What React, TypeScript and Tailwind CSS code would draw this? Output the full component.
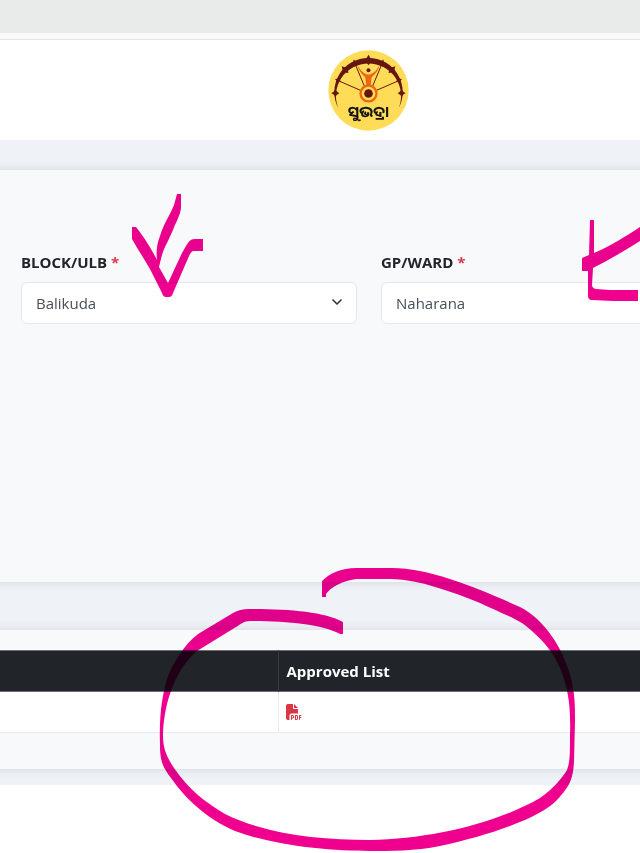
import { ChevronDown } from 'lucide-react'
import { FaFilePdf } from 'react-icons/fa6'

const fields = [
  { id: 'block', label: 'BLOCK/ULB', value: 'Balikuda' },
  { id: 'ward', label: 'GP/WARD', value: 'Naharana' },
]

// angle from the top of the wheel, and spike size
const spikes = [
  [-90, 1], [-67, 0.8], [-45, 1.2], [-24, 0.9], [0, 1.3], [24, 0.9], [45, 1.2], [67, 0.8], [90, 1],
]

function Logo() {
  return (
    <svg viewBox="30 28 244 244" className="h-[81px] w-[81px]" role="img" aria-label="ସୁଭଦ୍ରା">
      <circle cx="152" cy="150" r="121" fill="#ffdc58" />
      <g fill="#64160f">
        <path d="M61 203A103 103 0 1 1 243 203A98 98 0 1 0 61 203Z" />
        {spikes.map(([angle, size]) => (
          <path
            key={angle}
            d="M0 -12L4 -5L11 0L5 5L0 12L-5 5L-11 0L-4 -5Z"
            transform={`translate(152 158) rotate(${angle}) translate(0 -100) scale(${size})`}
          />
        ))}
      </g>
      <g stroke="#64160f" strokeWidth="3">
        <path d="M129 150L60 120M140 138L110 66M164 138L194 66M175 150L244 120" />
      </g>
      <path
        d="M119 73C122 89 132 102 142 109L146 139H158L162 109C172 102 182 89 185 73C177 88 168 98 158 101Q152 103 146 101C136 98 127 88 119 73Z"
        fill="#ef6512"
      />
      <circle cx="152" cy="89" r="6" fill="#64160f" />
      <circle cx="152" cy="159" r="24" fill="#ffdc58" stroke="#ef6512" strokeWidth="7" />
      <circle cx="152" cy="159" r="13" fill="#64160f" />
      <text
        x="152"
        y="230"
        textAnchor="middle"
        className="fill-[#17150f] font-['Noto_Sans_Oriya','Noto_Sans',sans-serif] text-[46px] font-bold"
      >
        ସୁଭଦ୍ରା
      </text>
    </svg>
  )
}

// Pen marks drawn over the page
function Ink() {
  return (
    <svg
      width="640"
      height="853"
      viewBox="0 0 640 853"
      fill="#f0008e"
      aria-hidden="true"
      className="pointer-events-none absolute top-0 left-0 mix-blend-multiply"
    >
      <path d="M132 227H136C146 240 152 250 157 260C156 250 157 244 160 236C164 223 171 213 174 205L177 194H181V208C180 216 176 222 173 230L167 243C162 252 161 259 159 267L168 283L182 253C188 243 189 239 195 239H203V251H194C190 251 189 257 186 263L173 293Q172 297 169 297H166Q163 297 162 293L150 269C145 260 138 250 132 239Z" />
      <path d="M590 220H594L594 253C611 246 626 236 640 227V241C624 251 609 260 593 268L592 285Q592 288 596 289L610 290H638V301C620 301 606 301 592 300Q588 300 588 296L588 271H582V258L589 255Z" />
      <path d="M322 581C330 573 342 568 356 568H392C430 568 480 589 520 607C545 620 563 648 571 678C575 695 575 705 575 720L574 762C573 780 569 787 557 800C540 818 490 835 440 846C415 851 390 851 370 851C330 851 275 846 235 831C205 818 185 797 174 782C163 768 160 762 160 745C159 715 162 695 168 676C177 655 190 638 203 631L233 613C240 609 246 609 252 609C290 609 325 612 343 622V634H340C322 624 285 621 250 621C244 621 241 624 236 627L197 651C178 667 164 698 163 735C163 750 167 757 174 768C189 790 205 802 225 814C265 834 320 840 370 840C430 839 495 824 540 798C553 789 562 778 567 770C570 762 570 755 570 735C571 705 568 688 560 668C553 652 544 642 533 632C521 620 510 617 480 603C450 591 420 580 392 579H356C342 581 331 587 326 594V597H322Z" />
    </svg>
  )
}

export default function App() {
  return (
    <div className="relative isolate min-h-screen overflow-hidden bg-white font-['Segoe_UI','Open_Sans',sans-serif] text-[#212529]">
      <div className="h-[33px] bg-[#e8ebe9]" />
      <div className="h-[7px] border-b border-[#e6e6e6] bg-[#f9f9f9]" />

      <header className="flex h-[100px] justify-center bg-white pt-[10px] pl-[97px]">
        <Logo />
      </header>

      <main className="overflow-hidden bg-[#eff3f8] pt-[30px] pb-4">
        <section className="-mx-4 h-[412px] bg-[#f8f9fb] px-4 pt-20 shadow-[0_0_10px_rgba(0,0,0,0.12)]">
          <form className="flex gap-6 pl-[21px]">
            {fields.map((field) => (
              <div key={field.id} className="w-[336px] shrink-0">
                <label htmlFor={field.id} className="flex gap-1 pb-2 text-[15px] leading-6 font-bold">
                  {field.label} <span className="text-[#dc3545]">*</span>
                </label>
                <div className="relative">
                  <select
                    id={field.id}
                    defaultValue={field.value}
                    className="h-[42px] w-full appearance-none rounded-md border border-[#e4e7eb] bg-white px-[14px] text-[15px] text-[#495057]"
                  >
                    <option>{field.value}</option>
                  </select>
                  <ChevronDown
                    className="pointer-events-none absolute top-3 right-3 h-4 w-4 text-[#343a40]"
                    strokeWidth={2.5}
                  />
                </div>
              </div>
            ))}
          </form>
        </section>

        <section className="-mx-4 mt-12 bg-[#f8f9fb] px-4 pt-5 pb-9 shadow-[0_0_10px_rgba(0,0,0,0.12)]">
          <table className="w-full table-fixed border-collapse text-left">
            <thead>
              <tr className="h-[41px] border-y border-[#6b6f73] bg-[#212529] text-white">
                <th className="w-[278px]" aria-label="List name" />
                <th className="border-l border-[#373b3e] px-2 text-[15px] font-bold">Approved List</th>
              </tr>
            </thead>
            <tbody>
              <tr className="h-[41px] border-b border-[#e9ebee] bg-white">
                <td />
                <td className="border-l border-[#e9ebee] px-[7px]">
                  <a href="#pdf" aria-label="Approved list PDF" className="block text-[#dc3545]">
                    <FaFilePdf className="h-4 w-4" />
                  </a>
                </td>
              </tr>
            </tbody>
          </table>
        </section>
      </main>

      <Ink />
    </div>
  )
}
